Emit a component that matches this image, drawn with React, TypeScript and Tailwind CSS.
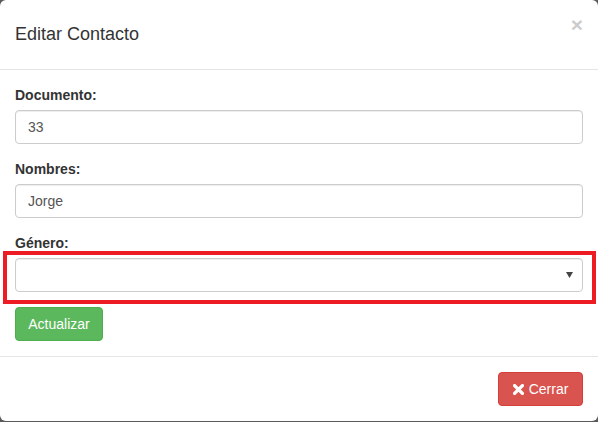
function Field({ label, value }: { label: string; value: string }) {
  return (
    <div className="mb-[15px]">
      <label className="block h-5 mb-[5px] text-[14px] leading-5 font-bold text-[#333]">{label}</label>
      <div className="h-[34px] rounded-[4px] border border-[#ccc] px-3 flex items-center text-[14px] text-[#555] shadow-[inset_0_1px_1px_rgba(0,0,0,0.075)]">
        {value}
      </div>
    </div>
  )
}

function App() {
  return (
    <main className="w-[598px] h-[422px] bg-[#5a5a5a] font-['Liberation_Sans',Arial,sans-serif]">
      <div className="h-[421px] bg-white rounded-[6px] overflow-hidden">
        {/* header */}
        <div className="h-[70px] border-b border-[#e5e5e5] px-[15px] flex justify-between items-start">
          <h4 className="mt-[21px] text-[18px] leading-[26px] text-[#333]">Editar Contacto</h4>
          <span className="mt-[14px] text-[21px] leading-none font-bold text-black opacity-20">×</span>
        </div>

        {/* body */}
        <div className="p-[15px]">
          <Field label="Documento:" value="33" />
          <Field label="Nombres:" value="Jorge" />

          <div className="mb-[15px]">
            <label className="block h-5 mb-[5px] text-[14px] leading-5 font-bold text-[#333]">Género:</label>
            <div className="relative">
              <div className="h-[34px] rounded-[4px] border border-[#ccc] px-3 flex items-center justify-end shadow-[inset_0_1px_1px_rgba(0,0,0,0.075)]">
                <svg width="7" height="6" viewBox="0 0 7 6" className="-mr-[3px]">
                  <path d="M0 0 H7 L3.5 6 Z" fill="#444" />
                </svg>
              </div>
              <div className="absolute -left-[12px] -right-[13px] -top-[7px] -bottom-[12px] border-[4px] border-[#ed1c24] pointer-events-none" />
            </div>
          </div>

          <button className="h-[34px] w-[88px] rounded-[4px] border border-[#4cae4c] bg-[#5cb85c] text-white text-[14px]">
            Actualizar
          </button>
        </div>

        {/* footer */}
        <div className="border-t border-[#e5e5e5] p-[15px] flex justify-end">
          <button className="h-[34px] w-[85px] rounded-[4px] border border-[#d43f3a] bg-[#d9534f] text-white text-[14px] flex items-center justify-center gap-[5px]">
            <svg width="11" height="11" viewBox="0 0 11 11">
              <path d="M1.6 1.6 L9.4 9.4 M9.4 1.6 L1.6 9.4" stroke="white" strokeWidth="3.4" strokeLinecap="round" />
            </svg>
            Cerrar
          </button>
        </div>
      </div>
    </main>
  )
}

export default App
